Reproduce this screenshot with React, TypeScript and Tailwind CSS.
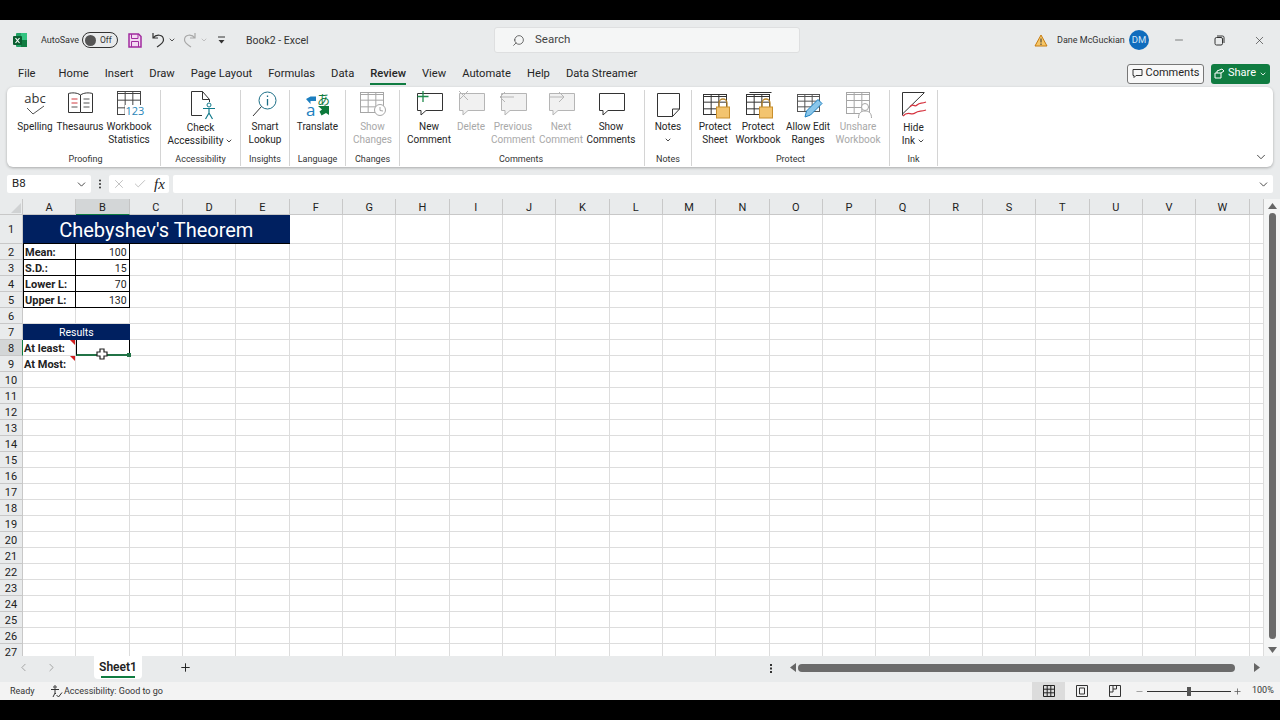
import { Check, ChevronDown, ChevronLeft, ChevronRight, Minus, Plus, Search, X } from "lucide-react";
import type { ReactNode } from "react";

const COLS = ["A", "B", "C", "D", "E", "F", "G", "H", "I", "J", "K", "L", "M", "N", "O", "P", "Q", "R", "S", "T", "U", "V", "W", ""];
const ROWS = Array.from({ length: 27 }, (_, i) => i + 1);
const TABS = ["Home", "Insert", "Draw", "Page Layout", "Formulas", "Data", "Review", "View", "Automate", "Help", "Data Streamer"];

function Svg({ children }: { children: ReactNode }) {
  return (
    <svg width="34" height="30" viewBox="0 0 34 30" fill="none" className="shrink-0">
      {children}
    </svg>
  );
}

function SheetGrid({ x, y, w, h, color }: { x: number; y: number; w: number; h: number; color: string }) {
  const c1 = x + w / 3;
  const c2 = x + (2 * w) / 3;
  const r1 = y + h / 3 + 1;
  const r2 = y + (2 * h) / 3 + 1;
  return (
    <g stroke={color} strokeWidth="1">
      <rect x={x} y={y} width={w} height={h} fill="#fff" />
      <path d={`M${c1} ${y}V${y + h}M${c2} ${y}V${y + h}M${x} ${r1}H${x + w}M${x} ${r2}H${x + w}`} />
      <path d={`M${x} ${y + 2}H${x + w}`} />
    </g>
  );
}

function Bubble({ color = "#333", fill = "#fff" }: { color?: string; fill?: string }) {
  return <path d="M5.5 3.5H30.5V20.5H14L9 25V20.5H5.5Z" stroke={color} fill={fill} />;
}

function Lock({ x }: { x: number }) {
  return (
    <g>
      <path d={`M${x - 4} 17V13a4 4 0 0 1 8 0v4`} stroke="#b9862c" strokeWidth="1.3" />
      <rect x={x - 6.5} y="17" width="13" height="11" fill="#f3c46f" stroke="#c98f2d" />
    </g>
  );
}

const ICONS: Record<string, ReactNode> = {
  spelling: (
    <Svg>
      <text x="17" y="13" textAnchor="middle" fontSize="13" fill="#333" fontFamily="'Open Sans', sans-serif">abc</text>
      <path d="M9 18L15 24L26 16" stroke="#555" />
    </Svg>
  ),
  thesaurus: (
    <Svg>
      <path d="M17.5 5C14 2.500 9 2.500 5.500 3.500V22.500H17.500H29.500V3.500C26 2.500 21 2.500 17.500 5V22" stroke="#333" fill="#fff" />
      <path d="M8.500 9H14.500M8.500 13H14.500" stroke="#d0383e" />
      <path d="M8.500 17H14.500M20.500 9H26.500M20.500 13H26.500M20.500 17H26.500" stroke="#555" />
    </Svg>
  ),
  stats: (
    <Svg>
      <SheetGrid x={5.5} y={1.5} w={23} h={23} color="#444" />
      <rect x="13" y="15" width="17" height="11" fill="#fff" />
      <text x="13.500" y="25" fontSize="11" fill="#2a86b8" fontFamily="'Open Sans', sans-serif">123</text>
    </Svg>
  ),
  access: (
    <Svg>
      <path d="M7.500 1.500H18.500L25.500 9.500V12M7.500 1.500V25.500H18M18.500 1.500V9.500H25.500" stroke="#333" />
      <circle cx="25" cy="15" r="2" stroke="#117a8b" />
      <path d="M19 18.500H31M25 18V23M25 23L21.500 29M25 23L28.500 29" stroke="#117a8b" strokeWidth="1.2" />
    </Svg>
  ),
  lookup: (
    <Svg>
      <circle cx="19.500" cy="10.500" r="8.500" stroke="#1d6f87" fill="#fff" />
      <path d="M13.500 16.500L5 26" stroke="#333" />
      <path d="M19.500 9V15.500M19.500 5.500V7" stroke="#1d6f87" strokeWidth="1.3" />
    </Svg>
  ),
  translate: (
    <Svg>
      <path d="M15 6.500V11H9.500V14L5 9L9.500 6.500Z" fill="#1c7fc0" />
      <text x="5" y="26" fontSize="17" fill="#1c7fc0" fontFamily="'Open Sans', sans-serif">a</text>
      <text x="16" y="14" fontSize="13" fill="#0d7a3c" fontFamily="'Noto Sans CJK JP', sans-serif">あ</text>
      <path d="M17 16H28V25L25 23L20.500 25.500L18.500 21.500L21 19.500Z" fill="#0d7a3c" />
    </Svg>
  ),
  changes: (
    <Svg>
      <SheetGrid x={4.5} y={2.5} w={23} h={20} color="#a6a6a6" />
      <circle cx="24" cy="20" r="5.500" fill="#fff" stroke="#a6a6a6" />
      <path d="M24 17V20.500L27 21" stroke="#a6a6a6" />
    </Svg>
  ),
  newComment: (
    <Svg>
      <Bubble />
      <path d="M11 1V12M5.500 6.500H16.500" stroke="#1f8a4c" strokeWidth="1.3" />
    </Svg>
  ),
  deleteComment: (
    <Svg>
      <Bubble color="#b5b5b5" fill="#f1f1f1" />
      <path d="M5 1L14 10M14 1L5 10" stroke="#b5b5b5" />
    </Svg>
  ),
  prevComment: (
    <Svg>
      <Bubble color="#b5b5b5" fill="#f1f1f1" />
      <path d="M4 7H18M4 7L9 2M4 7L9 12" stroke="#b5b5b5" />
    </Svg>
  ),
  nextComment: (
    <Svg>
      <Bubble color="#b5b5b5" fill="#f1f1f1" />
      <path d="M6 7H20M20 7L15 2M20 7L15 12" stroke="#b5b5b5" />
    </Svg>
  ),
  showComments: (
    <Svg>
      <Bubble />
    </Svg>
  ),
  notes: (
    <Svg>
      <path d="M6.500 3.500H28.500V19L21.500 26.500H6.500Z" stroke="#333" fill="#fff" />
      <path d="M21.500 26.500V19H28.500" stroke="#333" />
    </Svg>
  ),
  protectSheet: (
    <Svg>
      <SheetGrid x={5.5} y={4.5} w={23} h={20} color="#333" />
      <Lock x={25} />
    </Svg>
  ),
  protectBook: (
    <Svg>
      <path d="M8.500 2.500H30.500" stroke="#333" />
      <SheetGrid x={5.5} y={4.500} w={23} h={20} color="#333" />
      <Lock x={25} />
    </Svg>
  ),
  allowEdit: (
    <Svg>
      <SheetGrid x={6.500} y={4.500} w={22} h={17} color="#555" />
      <path d="M14 27L15.500 21L27 9.500L31 13.500L19.500 25Z" fill="#8ac6ea" stroke="#1c7fc0" />
    </Svg>
  ),
  unshare: (
    <Svg>
      <SheetGrid x={5.500} y={2.500} w={23} h={21} color="#a6a6a6" />
      <circle cx="24" cy="17" r="3.500" fill="#fff" stroke="#a6a6a6" />
      <path d="M17.500 28C17.500 23 20 21 24 21S30.500 23 30.500 28" fill="#fff" stroke="#a6a6a6" />
    </Svg>
  ),
  ink: (
    <Svg>
      <path d="M27.500 2.500H5.500V25.500" stroke="#333" />
      <path d="M27 3L5.500 24" stroke="#333" />
      <path d="M13 17C16 12 17 18 20 15S24 14 29 12M6 26C11 20 14 26 18 23S23 22 29 20" stroke="#d5313d" strokeWidth="1.3" />
    </Svg>
  ),
};

type Btn = { icon: string; lines: string[]; width: string; off?: boolean; caret?: boolean; low?: boolean };
type Group = { label: string; width: string; pad?: string; labelShift?: string; buttons: Btn[] };

const GROUPS: Group[] = [
  {
    label: "Proofing",
    width: "w-[154px]",
    pad: "pl-[8px]",
    labelShift: "-ml-[4px]",
    buttons: [
      { icon: "spelling", lines: ["Spelling"], width: "w-[40px]" },
      { icon: "thesaurus", lines: ["Thesaurus"], width: "w-[50px]" },
      { icon: "stats", lines: ["Workbook", "Statistics"], width: "w-[48px]" },
    ],
  },
  {
    label: "Accessibility",
    width: "w-[80px]",
    buttons: [{ icon: "access", lines: ["Check", "Accessibility"], width: "w-[79px]", caret: true, low: true }],
  },
  { label: "Insights", width: "w-[49px]", buttons: [{ icon: "lookup", lines: ["Smart", "Lookup"], width: "w-[48px]" }] },
  { label: "Language", width: "w-[56px]", buttons: [{ icon: "translate", lines: ["Translate"], width: "w-[55px]" }] },
  { label: "Changes", width: "w-[54px]", buttons: [{ icon: "changes", lines: ["Show", "Changes"], width: "w-[53px]", off: true }] },
  {
    label: "Comments",
    width: "w-[245px]",
    pad: "pl-[6px]",
    labelShift: "-ml-[8px]",
    buttons: [
      { icon: "newComment", lines: ["New", "Comment"], width: "w-[46px]" },
      { icon: "deleteComment", lines: ["Delete"], width: "w-[38px]", off: true },
      { icon: "prevComment", lines: ["Previous", "Comment"], width: "w-[46px]", off: true },
      { icon: "nextComment", lines: ["Next", "Comment"], width: "w-[50px]", off: true },
      { icon: "showComments", lines: ["Show", "Comments"], width: "w-[50px]" },
    ],
  },
  { label: "Notes", width: "w-[47px]", buttons: [{ icon: "notes", lines: ["Notes"], width: "w-[46px]", caret: true }] },
  {
    label: "Protect",
    width: "w-[198px]",
    pad: "pl-[2px]",
    labelShift: "-ml-[2px]",
    buttons: [
      { icon: "protectSheet", lines: ["Protect", "Sheet"], width: "w-[42px]" },
      { icon: "protectBook", lines: ["Protect", "Workbook"], width: "w-[44px]" },
      { icon: "allowEdit", lines: ["Allow Edit", "Ranges"], width: "w-[56px]" },
      { icon: "unshare", lines: ["Unshare", "Workbook"], width: "w-[44px]", off: true },
    ],
  },
  { label: "Ink", width: "w-[48px]", buttons: [{ icon: "ink", lines: ["Hide", "Ink"], width: "w-[47px]", caret: true, low: true }] },
];

function RibbonButton({ b }: { b: Btn }) {
  const stacked = b.icon === "notes";
  return (
    <div className={`${b.width} flex flex-col items-center ${b.off ? "text-[#a8a8a8]" : "text-[#262626]"}`}>
      <div className="flex h-[30px] w-[34px] items-start justify-center">{ICONS[b.icon]}</div>
      <div className={`flex flex-col items-center whitespace-nowrap text-[10px] leading-[13px] ${b.low ? "mt-[1px]" : ""}`}>
        {b.lines.map((line, i) => (
          <span key={line} className="flex items-center gap-[2px]">
            {line}
            {b.caret && !stacked && i === b.lines.length - 1 && <ChevronDown size={8} strokeWidth={2.5} />}
          </span>
        ))}
        {stacked && <ChevronDown size={8} strokeWidth={2.5} className="mt-[3px]" />}
      </div>
    </div>
  );
}

function Ribbon() {
  return (
    <div className="mx-[7px] flex h-[80px] shrink-0 rounded-[6px] bg-white pt-[3px] shadow-[0_1px_3px_rgba(0,0,0,0.28)]">
      {GROUPS.map((g) => (
        <div key={g.label} className={`${g.width} mb-[1px] flex shrink-0 flex-col justify-between border-r border-[#d4d4d4] ${g.pad ?? ""}`}>
          <div className="flex">
            {g.buttons.map((b) => (
              <RibbonButton key={b.icon} b={b} />
            ))}
          </div>
          <div className={`text-center text-[9px] leading-[13px] text-[#333] ${g.labelShift ?? ""}`}>{g.label}</div>
        </div>
      ))}
      <div className="flex flex-1 items-end justify-end pb-[3px] pr-[5px]">
        <ChevronDown size={14} strokeWidth={1.5} className="text-[#333]" />
      </div>
    </div>
  );
}

function TitleBar() {
  return (
    <div className="relative flex h-[40px] shrink-0 items-center text-[9px] text-[#333]">
      <svg width="16" height="16" viewBox="0 0 16 16" className="ml-[12px] shrink-0">
        <rect x="4" y="1" width="11" height="14" rx="1" fill="#21a366" />
        <rect x="9" y="1" width="6" height="7" fill="#33c481" />
        <rect x="9" y="8" width="6" height="7" fill="#107c41" />
        <rect x="1" y="4" width="9" height="9" rx="1" fill="#0b5e31" />
        <path d="M3.500 6L7.500 11M7.500 6L3.500 11" stroke="#fff" strokeWidth="1.2" />
      </svg>
      <span className="ml-[13px] mt-[1px] w-[35px] whitespace-nowrap">AutoSave</span>
      <div className="ml-[6px] flex h-[16px] w-[36px] items-center rounded-full border border-[#333] pl-[2px]">
        <span className="h-[11px] w-[11px] rounded-full bg-[#555]" />
        <span className="ml-[4px] text-[8.5px]">Off</span>
      </div>
      <svg width="14" height="15" viewBox="0 0 14 15" fill="none" className="ml-[10px] shrink-0">
        <path d="M1 1H10.500L13 3.500V14H1Z" stroke="#a12b9f" strokeWidth="1.5" fill="#f3d9f2" />
        <path d="M3.500 1V5.500H10V1M3.500 14V8.500H10.500V14" stroke="#a12b9f" />
      </svg>
      <svg width="14" height="16" viewBox="0 0 14 16" fill="none" stroke="#333" strokeWidth="1.2" className="ml-[9px] shrink-0">
        <path d="M2 1V6H7M2 6C5 2 12.500 2 12.500 8C12.500 11 9 13 6 15" />
      </svg>
      <ChevronDown size={8} strokeWidth={2.5} className="ml-[3px]" />
      <svg width="14" height="16" viewBox="0 0 14 16" fill="none" stroke="#a8a8a8" strokeWidth="1.2" className="ml-[7px] shrink-0">
        <path d="M12 1V6H7M12 6C9 2 1.500 2 1.500 8C1.500 11 5 13 8 15" />
      </svg>
      <ChevronDown size={8} className="ml-[3px] text-[#aaa]" />
      <svg width="9" height="9" viewBox="0 0 9 9" fill="none" className="ml-[9px] shrink-0">
        <path d="M1 1H8" stroke="#333" />
        <path d="M1.500 4H7.500L4.500 7.500Z" fill="#333" />
      </svg>
      <span className="ml-[20px] mt-[1px] text-[10.5px]">Book2 - Excel</span>
      <div className="absolute left-[494px] top-[7px] flex h-[26px] w-[306px] items-center rounded-[3px] border border-[#dedfe0] bg-[#f5f6f6] pl-[17px] text-[11.5px] text-[#444]">
        <Search size={13} strokeWidth={1.4} className="-scale-x-100" />
        <span className="ml-[10px]">Search</span>
      </div>
      <div className="ml-auto flex items-center">
        <svg width="14" height="13" viewBox="0 0 14 13" fill="none">
          <path d="M7 1L13 12H1Z" fill="#f6c667" stroke="#c77c11" />
          <path d="M7 4.500V8.500M7 9.500V11" stroke="#333" />
        </svg>
        <span className="ml-[9px] mt-[1px] w-[64px] whitespace-nowrap">Dane McGuckian</span>
        <span className="ml-[8px] flex h-[20px] w-[20px] items-center justify-center rounded-full bg-[#0f6cbd] text-[9.5px] text-[#cfe4f7]">DM</span>
        <Minus size={12} strokeWidth={1.2} className="ml-[24px]" />
        <svg width="11" height="11" viewBox="0 0 11 11" fill="none" stroke="#333" className="ml-[29px]">
          <rect x="1" y="2.500" width="7.500" height="7.500" rx="1.500" />
          <path d="M3 1H8.500A1.500 1.500 0 0 1 10 2.500V8" />
        </svg>
        <X size={13} strokeWidth={1.2} className="ml-[28px] mr-[14px]" />
      </div>
    </div>
  );
}

function TabBar() {
  return (
    <div className="flex h-[27px] shrink-0 items-center text-[11.2px] text-[#262626]">
      <span className="ml-[18px] mt-[2px]">File</span>
      <div className="ml-[23px] mt-[2px] flex gap-[16px]">
        {TABS.map((t) =>
          t === "Review" ? (
            <span key={t} className="relative font-medium">
              {t}
              <span className="absolute -bottom-[2px] left-0 h-[2px] w-full bg-[#107c41]" />
            </span>
          ) : (
            <span key={t}>{t}</span>
          ),
        )}
      </div>
      <div className="ml-auto flex items-center gap-[7px] pr-[10px]">
        <div className="flex h-[20px] w-[77px] items-center justify-center gap-[3px] rounded-[3px] border border-[#777] bg-[#f8f8f8] text-[11px]">
          <svg width="11" height="11" viewBox="0 0 11 11" fill="none" stroke="#333">
            <path d="M1 1.500H10V7.500H4L2 9.500V7.500H1Z" />
          </svg>
          Comments
        </div>
        <div className="flex h-[20px] w-[59px] items-center justify-center gap-[3px] rounded-[3px] bg-[#107c41] text-[11px] text-white">
          <svg width="11" height="11" viewBox="0 0 11 11" fill="none" stroke="#fff">
            <path d="M1 5H7V10H1ZM3 5V3L8 1L10 3L7 5" />
          </svg>
          Share
          <ChevronDown size={8} strokeWidth={2.5} />
        </div>
      </div>
    </div>
  );
}

function FormulaBar() {
  return (
    <div className="mx-[7px] mt-[8px] flex h-[18px] shrink-0 items-center text-[11.5px] text-[#222]">
      <div className="flex h-full w-[84px] items-center justify-between rounded-[2px] bg-white pl-[5px] pr-[3px]">
        B8
        <ChevronDown size={13} strokeWidth={1.5} />
      </div>
      <svg width="18" height="12" viewBox="0 0 18 12" className="shrink-0">
        <circle cx="9" cy="2.500" r="1" fill="#333" />
        <circle cx="9" cy="6" r="1" fill="#333" />
        <circle cx="9" cy="9.500" r="1" fill="#333" />
      </svg>
      <div className="flex h-full w-[60px] items-center gap-[7px] rounded-[2px] bg-white pl-[3px] text-[#a0a0a0]">
        <X size={14} strokeWidth={1.1} />
        <Check size={14} strokeWidth={1.1} />
        <span className="font-['Liberation_Serif',serif] text-[15px] italic text-[#222]">fx</span>
      </div>
      <div className="ml-[4px] flex h-full flex-1 items-center justify-end rounded-[2px] bg-white pr-[3px]">
        <ChevronDown size={13} strokeWidth={1.5} />
      </div>
    </div>
  );
}

function cellClass(col: string, row: number) {
  const base = "relative flex items-center border-r border-b pt-[2px]";
  const ink = "border-black bg-white";
  if (row >= 2 && row <= 5 && col === "A") return `${base} ${ink} border-l pl-[1px] pt-[3px] text-[11px] font-bold`;
  if (row >= 2 && row <= 5 && col === "B") return `${base} ${ink} justify-end pr-[2px]`;
  if (row === 8 && col === "A") return `${base} border-[#dddddd] bg-white pl-[1px] pt-[3px] text-[11px] font-bold`;
  if (row === 9 && col === "A") return `${base} border-[#dddddd] bg-white pl-[1px] pt-[3px] text-[11px] font-bold`;
  if (row === 8 && col === "B") return `${base} z-10 border-l border-b-2 border-l-black border-r-black border-b-[#217346] bg-white`;
  return `${base} border-[#dddddd] bg-white`;
}

const VALUES: Record<string, string> = {
  A2: "Mean:",
  B2: "100",
  A3: "S.D.:",
  B3: "15",
  A4: "Lower L:",
  B4: "70",
  A5: "Upper L:",
  B5: "130",
  A8: "At least:",
  A9: "At Most:",
};

function Worksheet() {
  return (
    <div className="grid h-full grid-cols-[23px_repeat(23,53.33px)_14px] grid-rows-[16px_29px_repeat(26,16px)] overflow-hidden text-[10.5px] text-[#222]">
      <div className="relative border-r border-b border-[#c8c8c8]">
        <svg width="10" height="10" className="absolute bottom-[1px] right-[1px]">
          <path d="M10 0V10H0Z" fill="#d0d2d3" />
        </svg>
      </div>
      {COLS.map((c) => (
        <div
          key={c || "X"}
          className={
            c === "B"
              ? "flex items-center justify-center border-r border-b border-r-[#c4c4c4] border-b-[#107c41] bg-[#d3d6d7] pt-[3px] text-[11px]"
              : "flex items-center justify-center border-r border-b border-[#c8c8c8] pt-[3px] text-[11px]"
          }
        >
          {c}
        </div>
      ))}
      {ROWS.map((row) => (
        <div key={row} className="contents">
          <div
            className={
              row === 8
                ? "flex items-center justify-center border-r border-b border-r-[#107c41] border-b-[#c8c8c8] bg-[#d3d6d7] pt-[3px] text-[11px]"
                : "flex items-center justify-center border-r border-b border-[#c8c8c8] pt-[3px] text-[11px]"
            }
          >
            {row}
          </div>
          {row === 1 && (
            <div className="col-span-5 flex items-center justify-center border-b border-black bg-[#002060] pt-[1px] text-[20px] text-white">
              Chebyshev's Theorem
            </div>
          )}
          {row === 7 && (
            <div className="col-span-2 flex items-center justify-center bg-[#002060] pt-[1px] text-white">Results</div>
          )}
          {COLS.map((c) => {
            if (row === 1 && "ABCDE".includes(c) && c) return null;
            if (row === 7 && (c === "A" || c === "B")) return null;
            return (
              <div key={c || "X"} className={cellClass(c, row)}>
                {VALUES[`${c}${row}`]}
                {c === "A" && (row === 8 || row === 9) && (
                  <svg width="5" height="5" className="absolute right-0 top-0">
                    <path d="M0 0H5V5Z" fill="#d21f1f" />
                  </svg>
                )}
                {c === "B" && row === 8 && (
                  <>
                    <span className="absolute -bottom-[3px] -right-[2px] h-[4px] w-[4px] bg-[#217346]" />
                    <svg width="12" height="12" viewBox="0 0 12 12" className="absolute left-[19px] top-[8px]">
                      <path d="M4 1H8V4H11V8H8V11H4V8H1V4H4Z" fill="#fff" stroke="#222" strokeWidth="1.2" />
                    </svg>
                  </>
                )}
              </div>
            );
          })}
        </div>
      ))}
    </div>
  );
}

function VScroll() {
  return (
    <div className="flex w-[16px] shrink-0 flex-col items-center bg-[#f4f5f5]">
      <svg width="9" height="6" viewBox="0 0 9 6" className="mt-[4px]">
        <path d="M4.500 0L9 6H0Z" fill="#666" />
      </svg>
      <div className="mt-[4px] h-[426px] w-[7px] rounded-full bg-[#6b6b6b]" />
      <svg width="9" height="6" viewBox="0 0 9 6" className="mt-auto mb-[3px]">
        <path d="M4.500 6L9 0H0Z" fill="#666" />
      </svg>
    </div>
  );
}

function SheetTabs() {
  return (
    <div className="flex h-[26px] shrink-0 items-start text-[#555]">
      <ChevronLeft size={13} strokeWidth={1.3} className="ml-[17px] mt-[5px] text-[#888]" />
      <ChevronRight size={13} strokeWidth={1.3} className="ml-[15px] mt-[5px] text-[#888]" />
      <div className="ml-[36px] flex h-[23px] w-[48px] flex-col items-center rounded-b-[4px] bg-white pt-[2px] text-[12px] font-semibold leading-[18px] text-[#222]">
        Sheet1
        <span className="h-[2px] w-[34px] bg-[#107c41]" />
      </div>
      <Plus size={13} strokeWidth={1.8} className="ml-[37px] mt-[5px] text-[#222]" />
      <svg width="4" height="11" viewBox="0 0 4 11" className="ml-[577px] mt-[7px]">
        <path d="M1 1H3V3H1ZM1 4.500H3V6.500H1ZM1 8H3V10H1Z" fill="#333" />
      </svg>
      <svg width="6" height="9" viewBox="0 0 6 9" className="ml-[17px] mt-[7px]">
        <path d="M6 0V9L0 4.500Z" fill="#666" />
      </svg>
      <div className="ml-[2px] mt-[8px] h-[8px] w-[437px] rounded-full bg-[#6b6b6b]" />
      <svg width="6" height="9" viewBox="0 0 6 9" className="ml-[19px] mt-[7px]">
        <path d="M0 0V9L6 4.500Z" fill="#666" />
      </svg>
    </div>
  );
}

function StatusBar() {
  return (
    <div className="flex h-[18px] shrink-0 items-center bg-[#f3f3f3] text-[9px] text-[#333]">
      <span className="ml-[10px] mt-[1px] w-[24px]">Ready</span>
      <svg width="13" height="13" viewBox="0 0 13 13" fill="none" stroke="#333" className="ml-[16px] mt-[1px]">
        <circle cx="5" cy="2" r="1.200" />
        <path d="M1 4.500H9M5 4.500V8L3 12M5 8L6 9" />
        <path d="M6.500 10L8.500 12L12 7.500" />
      </svg>
      <span className="ml-[1px] mt-[1px]">Accessibility: Good to go</span>
      <div className="ml-auto flex h-full items-center">
        <div className="flex h-full w-[33px] items-center justify-center bg-[#dcdcdc]">
          <svg width="12" height="12" viewBox="0 0 12 12" fill="none" stroke="#222">
            <path d="M.5.500H11.500V11.500H.5ZM4.200.500V11.500M7.800.500V11.500M.5 4.200H11.500M.5 7.800H11.500" />
          </svg>
        </div>
        <svg width="12" height="12" viewBox="0 0 12 12" fill="none" stroke="#333" className="ml-[11px]">
          <path d="M.5.500H11.500V11.500H.5ZM3.500 3H8.500V9H3.500Z" />
        </svg>
        <svg width="12" height="12" viewBox="0 0 12 12" fill="none" stroke="#333" className="ml-[21px]">
          <path d="M.5.500H11.500V11.500H.5ZM.5 7H4V.5" />
          <path d="M4 4H7.500V.5" />
        </svg>
        <Minus size={9} className="ml-[14px] text-[#888]" />
        <div className="relative ml-[3px] flex h-[9px] w-[84px] items-center">
          <div className="h-[1px] w-full bg-[#333]" />
          <span className="absolute left-[40px] h-[9px] w-[4px] bg-[#555]" />
        </div>
        <Plus size={9} className="ml-[2px] text-[#555]" />
        <span className="ml-[10px] w-[28px] whitespace-nowrap">100%</span>
      </div>
    </div>
  );
}

export default function App() {
  return (
    <div className="flex h-[720px] w-[1280px] flex-col overflow-hidden bg-black font-['Roboto',sans-serif]">
      <div className="h-[20px] shrink-0" />
      <div className="flex h-[680px] flex-col bg-[#e9ebec]">
        <TitleBar />
        <TabBar />
        <Ribbon />
        <FormulaBar />
        <div className="mt-[6px] flex h-[457px] shrink-0">
          <div className="w-[1264px] shrink-0">
            <Worksheet />
          </div>
          <VScroll />
        </div>
        <SheetTabs />
        <StatusBar />
      </div>
    </div>
  );
}
